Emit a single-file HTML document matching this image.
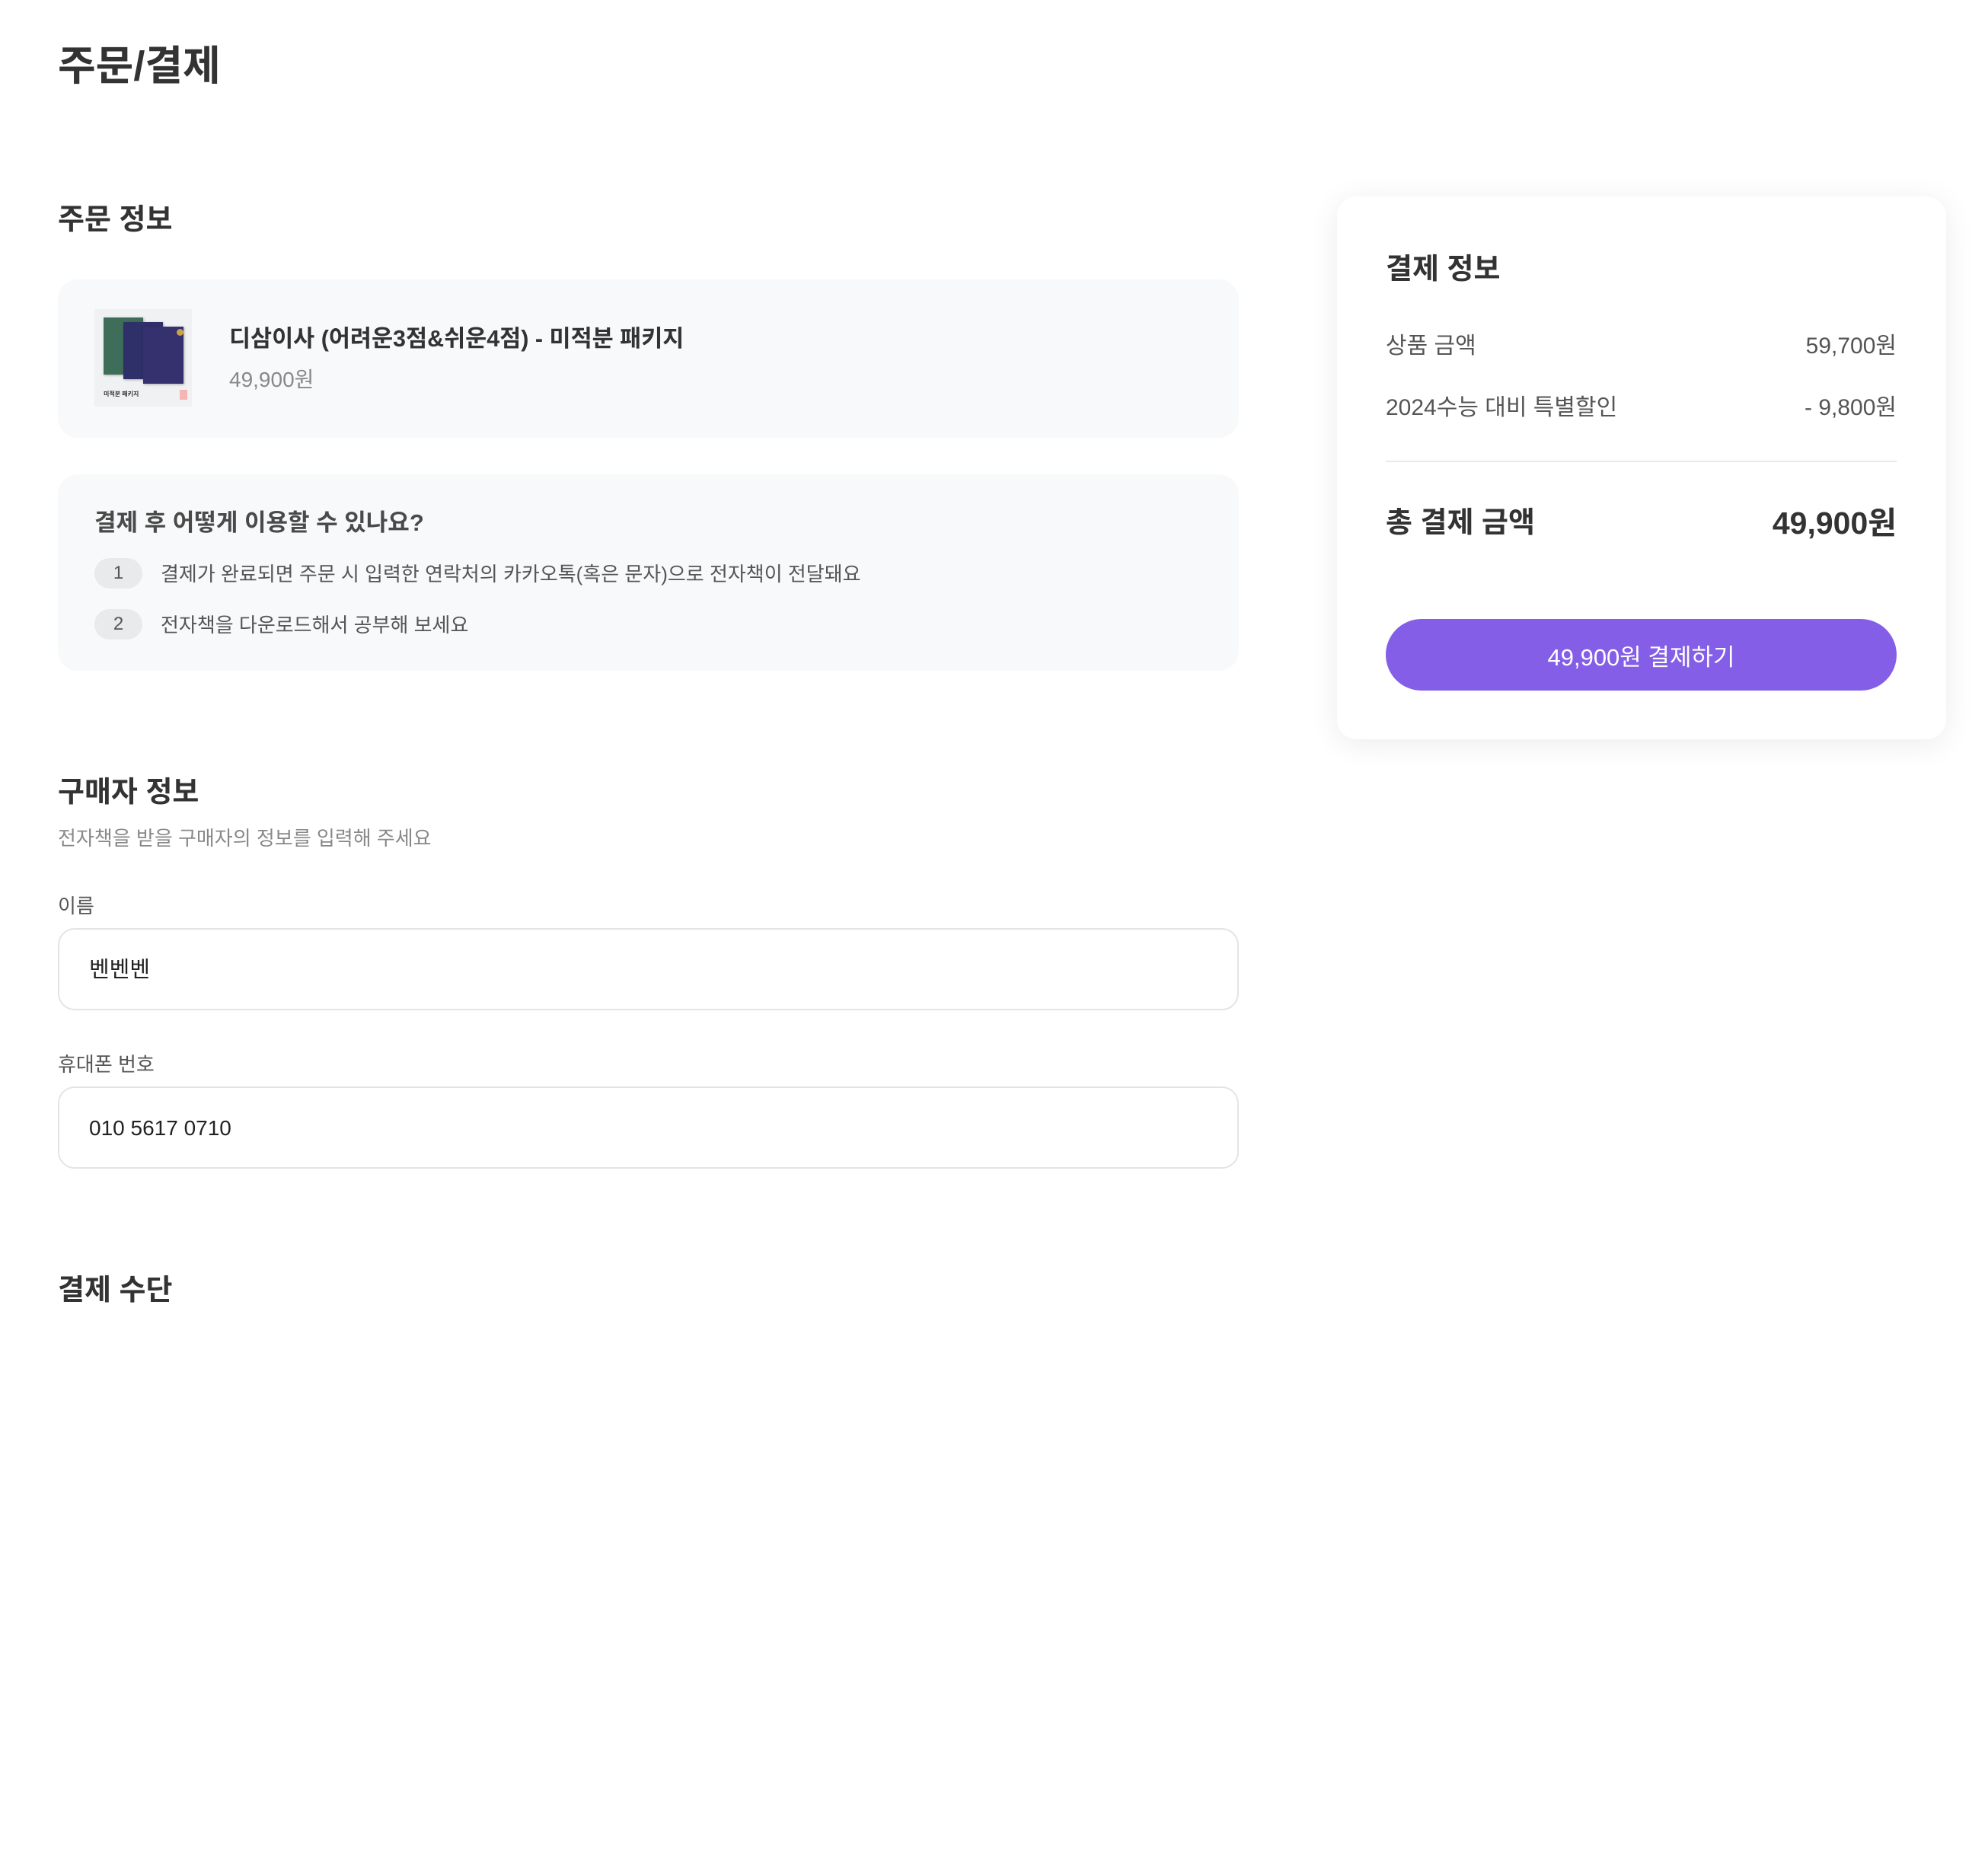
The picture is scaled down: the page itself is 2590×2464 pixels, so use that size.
<!DOCTYPE html>
<html lang="ko"><head><meta charset="utf-8">
<style>
*{margin:0;padding:0;box-sizing:border-box}
html,body{width:2590px;height:2464px;background:#fff;overflow:hidden}
body{font-family:"Liberation Sans","Noto Sans CJK KR",sans-serif;color:#333;position:relative}
.a{position:absolute;white-space:nowrap;line-height:1}
.card{position:absolute;background:#f8f9fa;border-radius:26px}
.badge{position:absolute;left:124px;width:63px;height:40px;border-radius:20px;background:#e9eaec;color:#555;font-size:24px;display:flex;align-items:center;justify-content:center}
.inp{position:absolute;left:76px;width:1551px;height:108px;border:2px solid #e3e4e7;border-radius:22px;background:#fff}
.book{position:absolute;box-shadow:1px 1px 3px rgba(0,0,0,.3)}
</style></head><body>
<div class="a" style="left:76px;top:60px;font-size:54px;font-weight:700;color:#333">주문/결제</div>

<div class="a" style="left:76px;top:270px;font-size:38px;font-weight:700">주문 정보</div>
<div class="card" style="left:76px;top:367px;width:1551px;height:208px"></div>
<div style="position:absolute;left:124px;top:406px;width:128px;height:128px;background:#f0f1f3">
  <div class="book" style="left:12px;top:11px;width:52px;height:75px;background:#3e6e5a"></div>
  <div class="book" style="left:38px;top:17px;width:52px;height:75px;background:#2f2f6a"></div>
  <div class="book" style="left:64px;top:23px;width:53px;height:75px;background:#35306e"></div>
  <div style="position:absolute;left:108px;top:26px;width:9px;height:9px;border-radius:50%;background:#c9a24a"></div>
  <div class="a" style="left:12px;top:108px;font-size:8px;font-weight:700;color:#333">미적분 패키지</div>
  <div style="position:absolute;left:112px;top:106px;width:10px;height:13px;background:#f6b5b5"></div>
</div>
<div class="a" style="left:301px;top:430px;font-size:30.5px;font-weight:700;color:#333">디삼이사 (어려운3점&amp;쉬운4점) - 미적분 패키지</div>
<div class="a" style="left:301px;top:485px;font-size:28px;color:#888">49,900원</div>

<div class="card" style="left:76px;top:623px;width:1551px;height:258px"></div>
<div class="a" style="left:124px;top:671px;font-size:31px;font-weight:700;color:#4a4a4a">결제 후 어떻게 이용할 수 있나요?</div>
<div class="badge" style="top:733px">1</div>
<div class="a" style="left:211px;top:741px;font-size:26px;color:#555">결제가 완료되면 주문 시 입력한 연락처의 카카오톡(혹은 문자)으로 전자책이 전달돼요</div>
<div class="badge" style="top:800px">2</div>
<div class="a" style="left:211px;top:808px;font-size:26px;color:#555">전자책을 다운로드해서 공부해 보세요</div>

<div class="a" style="left:76px;top:1022px;font-size:38px;font-weight:700">구매자 정보</div>
<div class="a" style="left:76px;top:1088px;font-size:26px;color:#888">전자책을 받을 구매자의 정보를 입력해 주세요</div>
<div class="a" style="left:76px;top:1177px;font-size:26px;color:#555">이름</div>
<div class="inp" style="top:1219px"></div>
<div class="a" style="left:117px;top:1260px;font-size:29px;color:#222">벤벤벤</div>
<div class="a" style="left:76px;top:1385px;font-size:26px;color:#555">휴대폰 번호</div>
<div class="inp" style="top:1427px"></div>
<div class="a" style="left:117px;top:1468px;font-size:28px;color:#222">010 5617 0710</div>

<div class="a" style="left:76px;top:1676px;font-size:38px;font-weight:700">결제 수단</div>

<div style="position:absolute;left:1756px;top:258px;width:800px;height:713px;background:#fff;border-radius:26px;box-shadow:0 6px 40px rgba(0,0,0,.08)"></div>
<div class="a" style="left:1820px;top:335px;font-size:38px;font-weight:700">결제 정보</div>
<div class="a" style="left:1820px;top:440px;font-size:30px;color:#555">상품 금액</div>
<div class="a" style="right:99px;top:440px;font-size:30px;color:#555">59,700원</div>
<div class="a" style="left:1820px;top:521px;font-size:30px;color:#555">2024수능 대비 특별할인</div>
<div class="a" style="right:99px;top:521px;font-size:30px;color:#555">- 9,800원</div>
<div style="position:absolute;left:1820px;top:605px;width:671px;height:2px;background:#e8e9eb"></div>
<div class="a" style="left:1820px;top:668px;font-size:38px;font-weight:700">총 결제 금액</div>
<div class="a" style="right:99px;top:667px;font-size:41px;font-weight:700">49,900원</div>
<div style="position:absolute;left:1820px;top:813px;width:671px;height:94px;border-radius:47px;background:#845ee7;color:#fff;font-size:31px;display:flex;align-items:center;justify-content:center">49,900원 결제하기</div>
</body></html>
